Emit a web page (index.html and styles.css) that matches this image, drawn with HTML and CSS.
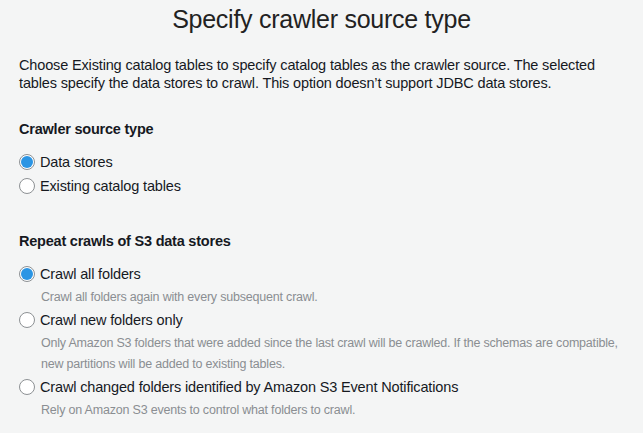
FILE: index.html
```html
<!DOCTYPE html>
<html>
<head>
<meta charset="utf-8">
<link rel="stylesheet" href="styles.css">
</head>
<body>
<div class="page">
  <h1 class="title">Specify crawler source type</h1>
  <p class="intro">Choose Existing catalog tables to specify catalog tables as the crawler source. The selected tables specify the data stores to crawl. This option doesn’t support JDBC data stores.</p>

  <section class="group group-source">
    <h2 class="group-title">Crawler source type</h2>
    <div class="options tight">
      <div class="option"><span class="radio checked"></span><span class="label">Data stores</span></div>
      <div class="option"><span class="radio"></span><span class="label">Existing catalog tables</span></div>
    </div>
  </section>

  <section class="group group-repeat">
    <h2 class="group-title">Repeat crawls of S3 data stores</h2>
    <div class="options">
      <div class="option-block">
        <div class="option"><span class="radio checked"></span><span class="label">Crawl all folders</span></div>
        <p class="desc">Crawl all folders again with every subsequent crawl.</p>
      </div>
      <div class="option-block">
        <div class="option"><span class="radio"></span><span class="label">Crawl new folders only</span></div>
        <p class="desc">Only Amazon S3 folders that were added since the last crawl will be crawled. If the schemas are compatible, new partitions will be added to existing tables.</p>
      </div>
      <div class="option-block">
        <div class="option"><span class="radio"></span><span class="label">Crawl changed folders identified by Amazon S3 Event Notifications</span></div>
        <p class="desc">Rely on Amazon S3 events to control what folders to crawl.</p>
      </div>
    </div>
  </section>
</div>
</body>
</html>
```

FILE: styles.css
```css
html, body {
  margin: 0;
  padding: 0;
  background: #f4f5f5;
}
body {
  font-family: "Liberation Sans", Arial, sans-serif;
  color: #16191f;
}
.page {
  padding: 3px 19px 0 19px;
}
.title {
  margin: 0;
  text-align: center;
  font-size: 25px;
  letter-spacing: -0.26px;
  font-weight: normal;
  color: #222;
  line-height: 32px;
}
.intro {
  margin: 21px 0 0 0;
  font-size: 14.5px;
  letter-spacing: -0.15px;
  line-height: 18px;
  color: #16191f;
}
.group-title {
  margin: 0;
  font-size: 14.5px;
  letter-spacing: -0.22px;
  font-weight: bold;
  line-height: 18px;
  color: #16191f;
}
.group-source {
  margin-top: 28px;
}
.group-repeat {
  margin-top: 34px;
}
.options {
  margin-top: 12px;
}
.tight {
  margin-top: 12px;
}
.option {
  display: flex;
  align-items: center;
  height: 24px;
}
.label {
  font-size: 14.5px;
  letter-spacing: -0.15px;
  color: #16191f;
}
.radio {
  box-sizing: border-box;
  width: 16px;
  height: 16px;
  border: 1px solid #8d9194;
  border-radius: 50%;
  background: #fff;
  margin-right: 5px;
  display: flex;
  align-items: center;
  justify-content: center;
}
.radio.checked::after {
  content: "";
  width: 12px;
  height: 12px;
  border-radius: 50%;
  background: #2b95e4;
}
.desc {
  margin: 1px 0 0 22px;
  font-size: 12.5px;
  letter-spacing: -0.2px;
  line-height: 21px;
  color: #8a8e92;
}
```
